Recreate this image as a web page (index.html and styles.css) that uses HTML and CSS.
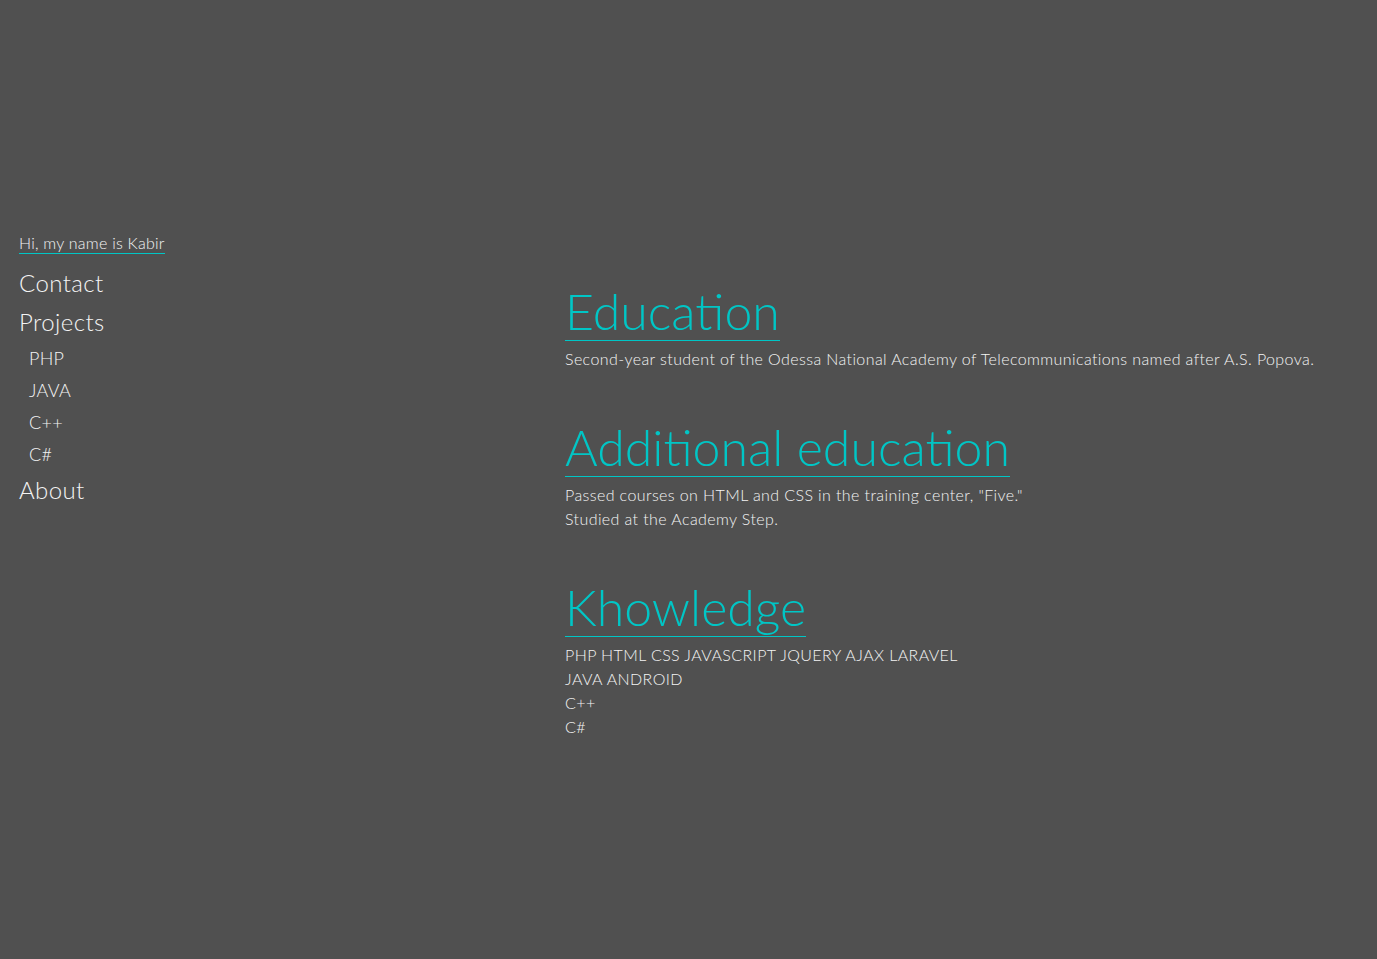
FILE: index.html
```html
<!DOCTYPE html>
<html lang="en">
<head>
<meta charset="utf-8">
<title>Kabir</title>
<link rel="stylesheet" href="styles.css">
</head>
<body>
<div class="page">
  <nav class="sidebar">
    <a class="hello" href="#">Hi, my name is Kabir</a>
    <ul class="menu">
      <li class="menu-item"><a href="#">Contact</a></li>
      <li class="menu-item"><a href="#">Projects</a>
        <ul class="submenu">
          <li><a href="#">PHP</a></li>
          <li><a href="#">JAVA</a></li>
          <li><a href="#">C++</a></li>
          <li><a href="#">C#</a></li>
        </ul>
      </li>
      <li class="menu-item"><a href="#">About</a></li>
    </ul>
  </nav>
  <main class="content">
    <section class="block">
      <h2 class="title">Education</h2>
      <p class="text">Second-year student of the Odessa National Academy of Telecommunications named after A.S. Popova.</p>
    </section>
    <section class="block">
      <h2 class="title">Additional education</h2>
      <p class="text">Passed courses on HTML and CSS in the training center, "Five."<br>Studied at the Academy Step.</p>
    </section>
    <section class="block">
      <h2 class="title">Khowledge</h2>
      <p class="text">PHP HTML CSS JAVASCRIPT JQUERY AJAX LARAVEL<br>JAVA ANDROID<br>C++<br>C#</p>
    </section>
  </main>
</div>
</body>
</html>
```
FILE: styles.css
```css
html, body {
  margin: 0;
  padding: 0;
  background: #505050;
}
body {
  font-family: Lato, "Open Sans", sans-serif;
  font-weight: 300;
  color: #f4f4f4;
  min-height: 959px;
}
a {
  color: inherit;
  text-decoration: none;
}
.page {
  display: flex;
}
.sidebar {
  width: 565px;
  box-sizing: border-box;
  padding: 233px 0 0 19px;
  flex-shrink: 0;
}
.hello {
  display: inline-block;
  font-size: 16px;
  line-height: 20px;
  letter-spacing: 0.25px;
  border-bottom: 1px solid #00c6c6;
}
.menu {
  list-style: none;
  margin: 9px 0 0;
  padding: 0;
}
.menu-item > a {
  display: block;
  font-size: 24px;
  line-height: 39px;
  letter-spacing: 0.4px;
}
.submenu {
  list-style: none;
  margin: 0;
  padding: 1px 0 0 10px;
}
.submenu a {
  display: block;
  font-size: 18px;
  line-height: 32px;
  letter-spacing: 0.3px;
}
.content {
  padding-top: 282px;
}
.block {
  margin-bottom: 47px;
}
.title {
  display: inline-block;
  margin: 0;
  font-size: 50px;
  font-weight: 300;
  line-height: 58px;
  color: #00c6c6;
  border-bottom: 1px solid #00c6c6;
}
.text {
  margin: 6px 0 0;
  font-size: 16px;
  line-height: 24px;
  letter-spacing: 0.4px;
}
```
